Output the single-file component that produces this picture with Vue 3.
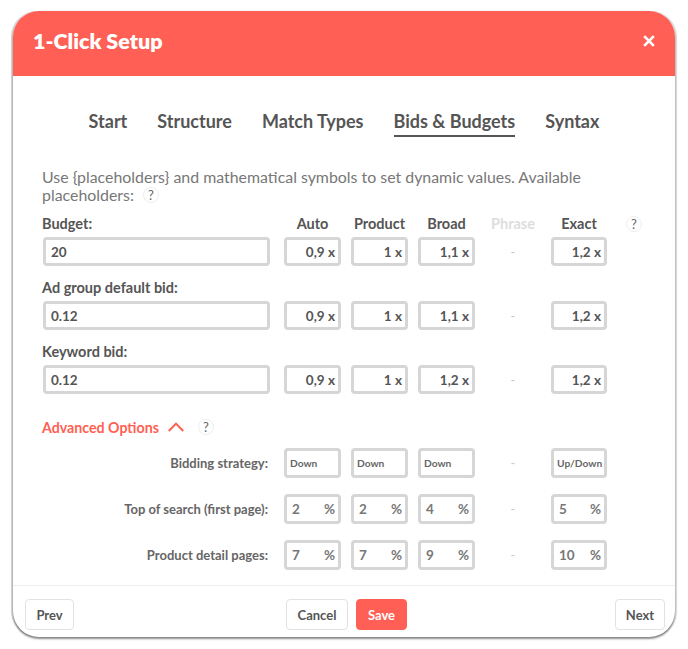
<script setup>
const tabs = ['Start', 'Structure', 'Match Types', 'Bids & Budgets', 'Syntax']
const rows = [
  { label: 'Budget:', value: '20', m: ['0,9 x', '1 x', '1,1 x', '1,2 x'] },
  { label: 'Ad group default bid:', value: '0.12', m: ['0,9 x', '1 x', '1,1 x', '1,2 x'] },
  { label: 'Keyword bid:', value: '0.12', m: ['0,9 x', '1 x', '1,2 x', '1,2 x'] }
]
const adv = [
  { label: 'Top of search (first page):', v: ['2', '2', '4', '5'] },
  { label: 'Product detail pages:', v: ['7', '7', '9', '10'] }
]
const strategy = ['Down', 'Down', 'Down', 'Up/Down']
</script>

<template>
  <div class="page">
    <section class="modal">
      <header class="head">
        <h1>1-Click Setup</h1>
        <svg class="close" width="12" height="12" viewBox="0 0 12 12"><path d="M1.2 1.2 10.8 10.8M10.8 1.2 1.2 10.8" stroke="#fff" stroke-width="2.6" /></svg>
      </header>
      <main class="body">
        <nav class="tabs">
          <span v-for="t in tabs" :key="t" class="tab" :class="{ on: t === 'Bids & Budgets' }">{{ t }}</span>
        </nav>
        <p class="intro">Use {placeholders} and mathematical symbols to set dynamic values. Available placeholders: <span class="q">?</span></p>

        <div class="cols">
          <b class="lab">Budget:</b>
          <b class="col">Auto</b><b class="col">Product</b><b class="col">Broad</b><b class="col off">Phrase</b><b class="col">Exact</b>
          <span class="q qend">?</span>
        </div>
        <div v-for="(r, i) in rows" :key="r.label" class="block">
          <b v-if="i" class="lab rowlab">{{ r.label }}</b>
          <div class="grid">
            <div class="field wide">{{ r.value }}</div>
            <div class="field mult">{{ r.m[0] }}</div>
            <div class="field mult">{{ r.m[1] }}</div>
            <div class="field mult">{{ r.m[2] }}</div>
            <div class="dash">-</div>
            <div class="field mult">{{ r.m[3] }}</div>
          </div>
        </div>

        <div class="advhead">
          <b>Advanced Options</b>
          <svg width="16" height="10" viewBox="0 0 16 10"><path d="M.8 9 8 1.6 15.2 9" fill="none" stroke="#ff5f54" stroke-width="2" /></svg>
          <span class="q">?</span>
        </div>
        <div class="grid adv first">
          <b class="advlab">Bidding strategy:</b>
          <div class="field small">{{ strategy[0] }}</div>
          <div class="field small">{{ strategy[1] }}</div>
          <div class="field small">{{ strategy[2] }}</div>
          <div class="dash">-</div>
          <div class="field small">{{ strategy[3] }}</div>
        </div>
        <div v-for="a in adv" :key="a.label" class="grid adv">
          <b class="advlab">{{ a.label }}</b>
          <div class="field pct"><span>{{ a.v[0] }}</span><span>%</span></div>
          <div class="field pct"><span>{{ a.v[1] }}</span><span>%</span></div>
          <div class="field pct"><span>{{ a.v[2] }}</span><span>%</span></div>
          <div class="dash">-</div>
          <div class="field pct"><span>{{ a.v[3] }}</span><span>%</span></div>
        </div>
      </main>
      <footer class="foot">
        <button class="btn prev">Prev</button>
        <div class="mid">
          <button class="btn cancel">Cancel</button>
          <button class="btn save">Save</button>
        </div>
        <button class="btn next">Next</button>
      </footer>
    </section>
  </div>
</template>

<style>
html, body { margin: 0; background: #fff; }
</style>

<style scoped>
.page {
  width: 688px;
  height: 649px;
  padding: 11px 13px 12px;
  box-sizing: border-box;
  font-family: Lato, "Noto Sans", sans-serif;
  color: #555;
}
.modal {
  width: 662px;
  height: 626px;
  border-radius: 26px;
  background: #fff;
  box-shadow: 0 2px 2px rgba(0, 0, 0, .45), -2px 0 1px rgba(0, 0, 0, .18), 2px 0 1px rgba(0, 0, 0, .14);
  display: flex;
  flex-direction: column;
  overflow: hidden;
}
.head {
  height: 65px;
  flex: none;
  box-sizing: border-box;
  background: #ff5f54;
  color: #fff;
  display: flex;
  align-items: center;
  justify-content: space-between;
  padding: 0 20px 5px 20px;
}
h1 { margin: 0; font-size: 21.5px; font-weight: 800; }
.close { display: block; }
.body { flex: 1; padding: 0 29px; }
.tabs {
  display: flex;
  justify-content: center;
  gap: 30px;
  padding-top: 34px;
  height: 58px;
  font-size: 18px;
  font-weight: 700;
}
.tab { height: 25px; line-height: 23px; white-space: nowrap; }
.tab.on { border-bottom: 2px solid #555; }
.intro {
  margin: 0;
  width: 570px;
  font-size: 15.9px;
  line-height: 18px;
  color: #777;
  height: 36px;
}
.q {
  display: inline-flex;
  align-items: center;
  justify-content: center;
  box-sizing: border-box;
  width: 16px;
  height: 16px;
  border: 1px solid #eee;
  border-radius: 50%;
  margin-left: 5px;
  font-size: 13px;
  line-height: 14px;
  color: #666;
  vertical-align: 1px;
}
.cols, .grid {
  display: grid;
  grid-template-columns: 232px 57px 57px 57px 56px 56px;
  column-gap: 10px;
  align-items: center;
}
.cols {
  position: relative;
  height: 20px;
  margin-top: 10px;
  padding-bottom: 3px;
  line-height: 20px;
  font-size: 14.5px;
}
.col { text-align: center; }
.off { color: #ddd; }
.qend { position: absolute; left: 584px; top: 2px; margin: 0; }
.lab { font-size: 14.5px; }
.rowlab { display: block; line-height: 20px; margin-top: 12px; margin-bottom: 3px; }
.field {
  box-sizing: border-box;
  height: 29px;
  border: 3px solid #d6d6d6;
  border-radius: 4px;
  display: flex;
  align-items: center;
  font-size: 13.5px;
  font-weight: 700;
  background: #fff;
  white-space: nowrap;
}
.wide { width: 227px; margin-left: 1px; padding-left: 5px; }
.mult { justify-content: flex-end; padding-right: 3px; }
.dash { text-align: center; color: #ccc; font-size: 13px; }
.advhead {
  height: 20px;
  margin-top: 23px;
  display: flex;
  align-items: center;
  font-size: 14.2px;
  color: #ff5f54;
}
.advhead svg { margin-left: 9px; margin-right: 14px; }
.advhead .q { margin-left: 0; }
.adv { margin-top: 16px; color: #666; }
.adv.first { margin-top: 11px; }
.adv .field { height: 30px; }
.advlab { text-align: right; font-size: 13px; padding-right: 6px; }
.small { font-size: 10.2px; padding-left: 3px; }
.pct { justify-content: space-between; padding: 0 3px 0 5px; font-size: 13.5px; color: #777; }
.foot {
  flex: none;
  height: 52px;
  border-top: 1px solid #eee;
  display: flex;
  align-items: flex-start;
  padding: 13px 10px 0 12px;
  box-sizing: border-box;
  justify-content: space-between;
}
.mid { display: flex; gap: 8px; margin-left: 4px; }
.btn {
  height: 31px;
  border: 1px solid #e2e2e2;
  border-radius: 4px;
  background: #fff;
  font-family: inherit;
  font-size: 13px;
  font-weight: 700;
  color: #555;
  padding: 0;
}
.prev { width: 49px; }
.next { width: 50px; }
.cancel { width: 62px; }
.save { width: 51px; background: #ff5f54; border-color: #ff5f54; color: #fff; }
</style>
